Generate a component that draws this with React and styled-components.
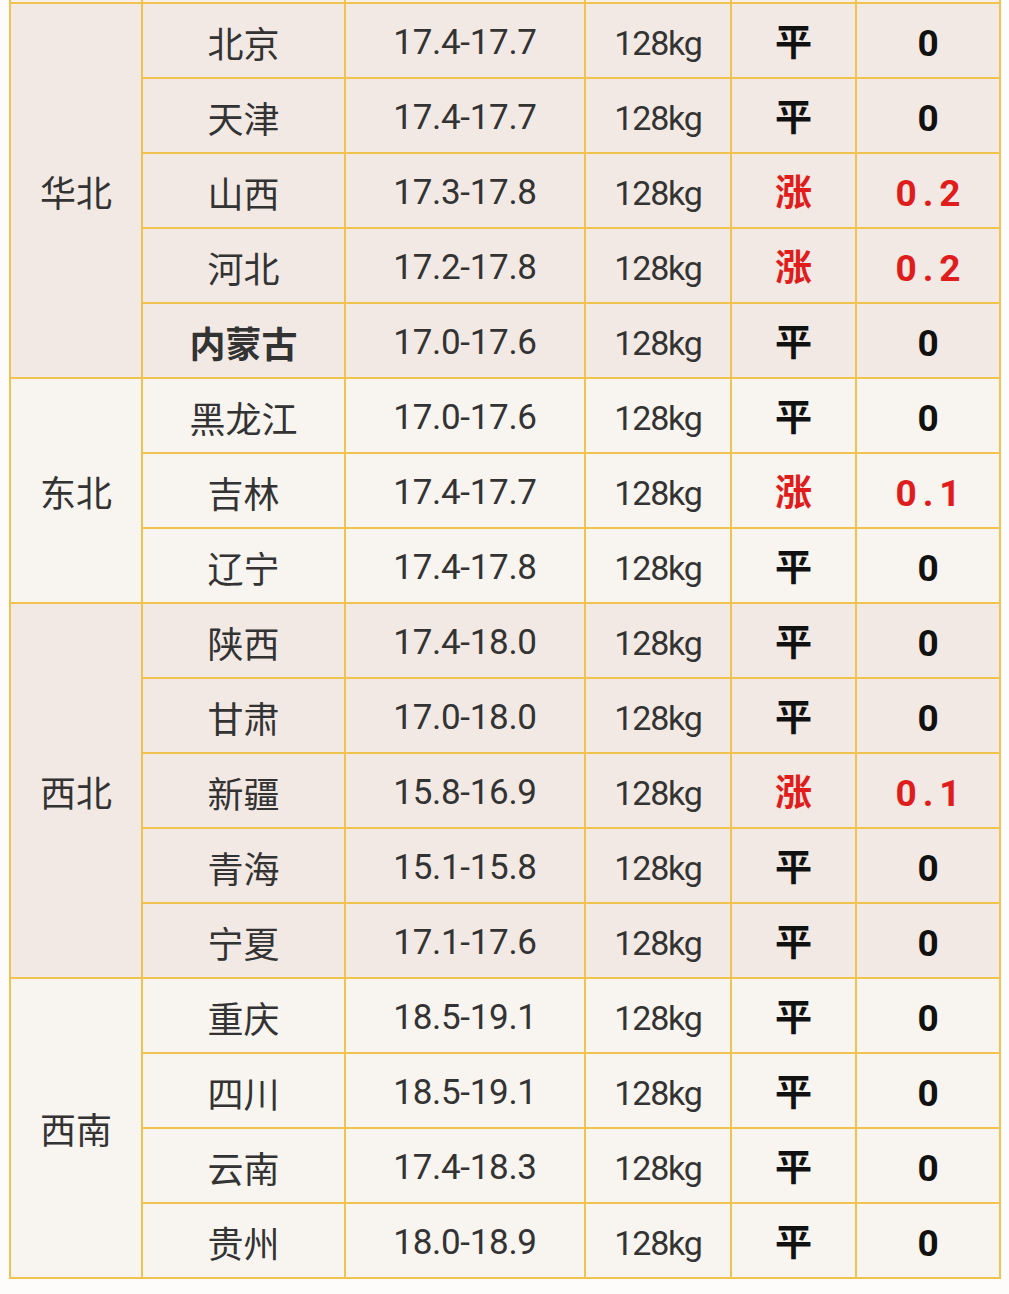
import React from 'react';
import styled, { createGlobalStyle } from 'styled-components';

const GlobalStyle = createGlobalStyle`
  html, body {
    margin: 0;
    padding: 0;
    background: #fdfcfa;
  }
  body {
    font-family: Roboto, "Noto Sans CJK SC", sans-serif;
  }
`;

const BORDER = '#f0c24f';
const TONES = { dark: '#f2e9e4', light: '#f8f4ef' };

// 整张表：金色底 + 2px 间隙当作网格线
const Sheet = styled.div`
  margin-left: 9px;
  width: 992px;
  display: grid;
  grid-template-columns: 130px 201px 238px 144px 123px 142px;
  grid-template-rows: 2px;
  grid-auto-rows: 73px;
  gap: 2px;
  padding: 0 2px 2px;
  box-sizing: border-box;
  background: ${BORDER};
`;

const Cell = styled.div`
  display: flex;
  align-items: center;
  justify-content: center;
  padding-top: 4px;
  box-sizing: border-box;
  background: ${p => TONES[p.$tone]};
  color: #333;
  font-size: 33px;
  line-height: 1;
`;

const SliverCell = styled.div`
  background: #f7efe8;
`;

const RegionCell = styled(Cell)`
  grid-row: span ${p => p.$span};
  font-family: "Noto Sans CJK SC", sans-serif;
  font-size: 36px;
  padding-top: 0;
`;

const Province = styled(Cell)`
  font-family: "Noto Sans CJK SC", sans-serif;
  font-size: 36px;
  font-weight: ${p => (p.$bold ? 700 : 400)};
  padding-top: 2px;
`;

const Price = styled(Cell)`
  font-family: Roboto, sans-serif;
  font-size: ${p => (p.$unit ? '34px' : '35px')};
  letter-spacing: ${p => (p.$unit ? '-1.2px' : '-0.3px')};
`;

const Trend = styled(Cell)`
  font-family: "Noto Sans CJK SC", sans-serif;
  font-size: 37px;
  font-weight: 700;
  color: ${p => (p.$up ? '#e01c1c' : '#111')};
  padding-top: 0;
`;

const Change = styled(Cell)`
  font-family: Roboto, sans-serif;
  font-size: 37px;
  font-weight: 700;
  letter-spacing: ${p => (p.$up ? '6px' : '0')};
  padding-left: ${p => (p.$up ? '6px' : '0')};
  color: ${p => (p.$up ? '#e01c1c' : '#111')};
  padding-top: 6px;
`;

const groups = [
  {
    region: '华北',
    tone: 'dark',
    rows: [
      ['北京', '17.4-17.7', '0'],
      ['天津', '17.4-17.7', '0'],
      ['山西', '17.3-17.8', '0.2'],
      ['河北', '17.2-17.8', '0.2'],
      ['内蒙古', '17.0-17.6', '0', true],
    ],
  },
  {
    region: '东北',
    tone: 'light',
    rows: [
      ['黑龙江', '17.0-17.6', '0'],
      ['吉林', '17.4-17.7', '0.1'],
      ['辽宁', '17.4-17.8', '0'],
    ],
  },
  {
    region: '西北',
    tone: 'dark',
    rows: [
      ['陕西', '17.4-18.0', '0'],
      ['甘肃', '17.0-18.0', '0'],
      ['新疆', '15.8-16.9', '0.1'],
      ['青海', '15.1-15.8', '0'],
      ['宁夏', '17.1-17.6', '0'],
    ],
  },
  {
    region: '西南',
    tone: 'light',
    rows: [
      ['重庆', '18.5-19.1', '0'],
      ['四川', '18.5-19.1', '0'],
      ['云南', '17.4-18.3', '0'],
      ['贵州', '18.0-18.9', '0'],
    ],
  },
];

const App = () => (
  <>
    <GlobalStyle />
    <Sheet>
      {/* 上一行被截掉，只露出一条边 */}
      {Array.from({ length: 6 }, (_, i) => <SliverCell key={`s${i}`} />)}

      {groups.map(g => (
        <React.Fragment key={g.region}>
          <RegionCell $tone={g.tone} $span={g.rows.length}>{g.region}</RegionCell>
          {g.rows.map(([name, price, change, bold]) => {
            const up = change !== '0';
            return (
              <React.Fragment key={name}>
                <Province $tone={g.tone} $bold={bold}>{name}</Province>
                <Price $tone={g.tone}>{price}</Price>
                <Price $tone={g.tone} $unit>128kg</Price>
                <Trend $tone={g.tone} $up={up}>{up ? '涨' : '平'}</Trend>
                <Change $tone={g.tone} $up={up}>{change}</Change>
              </React.Fragment>
            );
          })}
        </React.Fragment>
      ))}
    </Sheet>
  </>
);

export default App;
